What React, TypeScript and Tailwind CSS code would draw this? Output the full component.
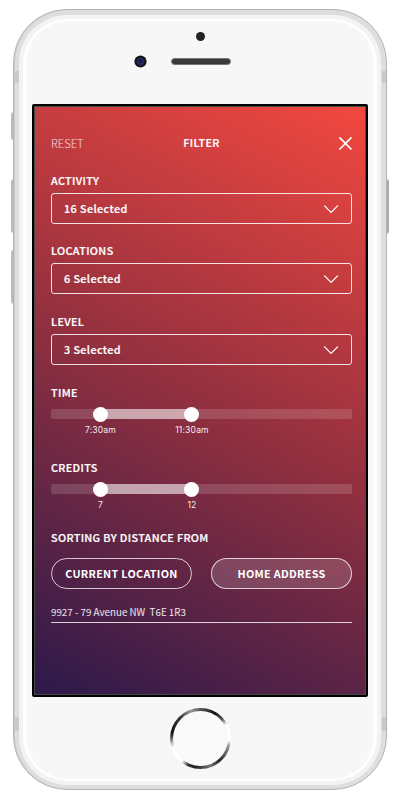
import React from 'react';

const Chevron = () => (
  <svg width="16" height="10" viewBox="0 0 16 10" fill="none" stroke="white" strokeWidth="1.3" strokeLinecap="round" strokeLinejoin="round">
    <path d="M1.6 1.9 8.1 8.4 14.6 1.9" />
  </svg>
);

// Semi-bold section heading: medium weight thickened by a hairline stroke.
const heading = 'h-5 text-[10.8px] font-medium leading-[18px] tracking-[0.36px] [-webkit-text-stroke:0.22px_white]';

function Select({ label, value, tall = false }: { label: string; value: string; tall?: boolean }) {
  return (
    <div className={tall ? 'h-[71px]' : 'h-[70px]'}>
      <div className={heading}>{label}</div>
      <div className="mt-[2px] flex h-[31px] items-center justify-between rounded-[3px] border border-white/85 pl-3 pr-[12px]">
        <span className="pb-px text-[10.8px] font-medium tracking-[0.4px] [-webkit-text-stroke:0.22px_white]">{value}</span>
        <Chevron />
      </div>
    </div>
  );
}

function Range({ label, from, to }: { label: string; from: string; to: string }) {
  return (
    <div>
      <div className={heading}>{label}</div>
      <div className="relative mt-[6px] h-[10px] rounded-[2px] bg-white/15">
        <div className="absolute left-[50px] top-0 h-full w-[91px] bg-white/50" />
        <div className="absolute left-[42px] top-[-2px] size-[15px] rounded-full bg-white" />
        <div className="absolute left-[133px] top-[-2px] size-[15px] rounded-full bg-white" />
      </div>
      <div className="mt-[5px] flex h-3 font-[Inter,sans-serif] text-[8.6px] leading-[13px] tracking-[0.15px] text-white/95">
        <span className="w-[99px] text-center">{from}</span>
        <span className="w-[84px] text-center">{to}</span>
      </div>
    </div>
  );
}

function Screen() {
  return (
    <div className="h-[593px] w-[336px] rounded-[2px] border-2 border-black bg-[#484848] p-px">
      <div className="flex h-full flex-col bg-[linear-gradient(208deg,#f2483f_0%,#93303f_50%,#2c194b_100%)] pl-4 pr-[13px] text-white">
        <header className="mt-[26px] flex h-5 items-center justify-between">
          <span className="w-[60px] text-[11.2px] font-light text-white/80">RESET</span>
          <span className={heading}>FILTER</span>
          <span className="flex w-[60px] justify-end">
            <svg width="13" height="13" viewBox="0 0 13 13" fill="none" stroke="white" strokeWidth="1.7" strokeLinecap="round">
              <path d="M.9.9 12 12M12 .9.9 12" />
            </svg>
          </span>
        </header>
        <div className="mt-[18px]">
          <Select label="ACTIVITY" value="16 Selected" />
          <Select label="LOCATIONS" value="6 Selected" tall />
          <Select label="LEVEL" value="3 Selected" tall />
        </div>
        <div className="flex flex-col gap-[22px]">
          <Range label="TIME" from="7:30am" to="11:30am" />
          <Range label="CREDITS" from="7" to="12" />
        </div>
        <div className="mt-[17px]">
          <div className={heading}>SORTING BY DISTANCE FROM</div>
        </div>
        <div className="mt-[10px] flex justify-between text-[10.8px] font-bold tracking-[0.3px]">
          <button className="h-[31px] w-[141px] rounded-full border border-white/75">CURRENT LOCATION</button>
          <button className="h-[31px] w-[141px] rounded-full border border-white/75 bg-white/15">HOME ADDRESS</button>
        </div>
        <div className="mt-[13px] h-[21px] whitespace-pre border-b border-white/80 text-[9.8px] leading-5 text-white/90">
          9927 - 79 Avenue NW  T6E 1R3
        </div>
      </div>
    </div>
  );
}

export default function App() {
  return (
    <div className="relative h-[800px] w-[400px] overflow-hidden bg-white pl-[13px] pt-[9px] font-['Noto_Sans_CJK_SC',sans-serif]">
      <div className="absolute left-[11px] top-[112px] h-7 w-[3px] rounded-l bg-[#bcbcbc]" />
      <div className="absolute left-[11px] top-[179px] h-[54px] w-[3px] rounded-l bg-[#bcbcbc]" />
      <div className="absolute left-[11px] top-[250px] h-[54px] w-[3px] rounded-l bg-[#bcbcbc]" />
      <div className="absolute left-[386px] top-[179px] h-[55px] w-[3px] rounded-r bg-[#aaaaaa]" />
      <div className="relative h-[781px] w-[374px] rounded-[54px] border border-[#b4b4b4] bg-[#dedede] px-[5px] pb-[4px] pt-[5px] shadow-[inset_1px_0_0_#cbcbcb]">
        <div className="absolute left-px top-[61px] h-3 w-1 bg-[#cacaca]" />
        <div className="absolute right-0 top-[61px] h-3 w-1 bg-[#cacaca]" />
        <div className="absolute left-px top-[707px] h-[14px] w-1 bg-[#cacaca]" />
        <div className="absolute right-0 top-[707px] h-[14px] w-1 bg-[#cacaca]" />
        <div className="h-full rounded-[48px] bg-[#f3f3f3] p-1">
          <div className="h-full rounded-[45px] bg-white px-[3px] py-[2px]">
            <div className="flex h-full flex-col items-center rounded-[42px] bg-[#f7f7f7]">
              <div className="ml-px mt-[11px] size-[9px] rounded-full bg-[#222]" />
              <div className="mt-[14px] flex h-[13px] w-full items-center pl-[108px]">
                <svg width="13" height="13" viewBox="0 0 13 13">
                  <circle cx="6.5" cy="6.5" r="6.1" fill="#151515" />
                  <circle cx="6.5" cy="6.5" r="3.7" fill="#24275e" />
                  <circle cx="6.5" cy="6" r="1.3" fill="#11122c" />
                </svg>
                <div className="ml-[24px] h-[7px] w-[60px] rounded-full border border-[#777] bg-[#393939]" />
              </div>
              <div className="mt-[36px]">
                <Screen />
              </div>
              <div className="mt-[11px] h-[61px] w-[61px] rounded-full bg-[conic-gradient(#555_0deg,#111_30deg,#555_48deg,#fff_62deg,#fff_94deg,#999_105deg,#222_140deg,#777_160deg,#222_190deg,#333_205deg,#fff_219deg,#fff_252deg,#aaa_263deg,#111_280deg,#333_315deg,#999_340deg,#555_360deg)] p-[3px]">
                <div className="h-full rounded-full bg-[#f9f9f9]" />
              </div>
            </div>
          </div>
        </div>
      </div>
    </div>
  );
}
